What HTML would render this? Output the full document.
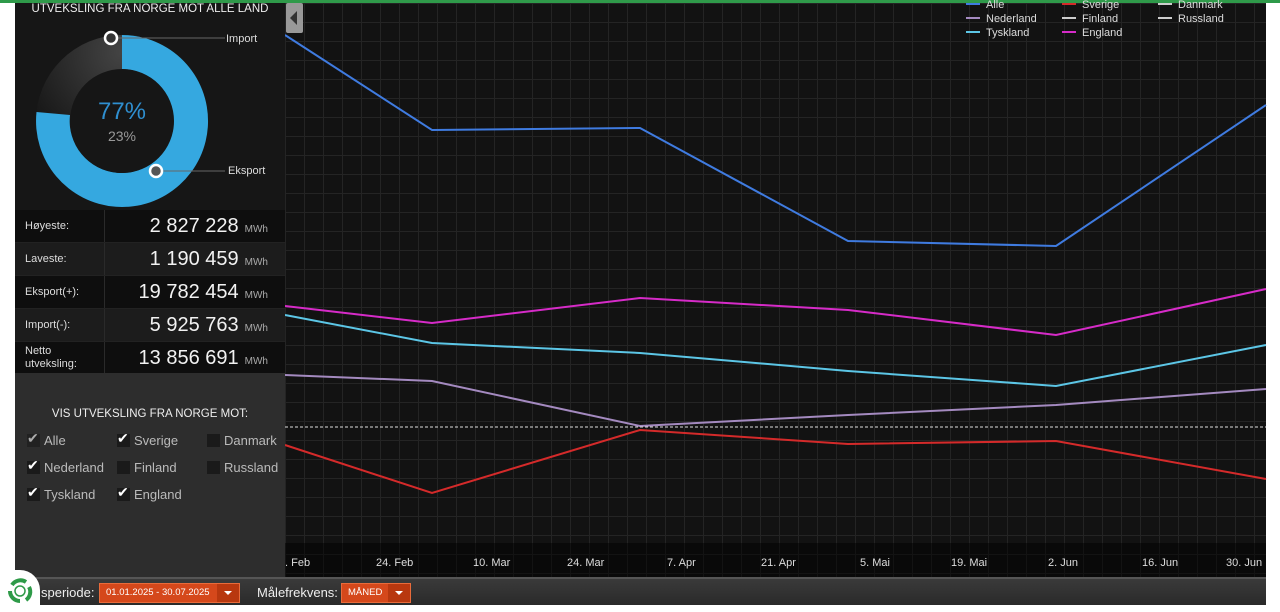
<!DOCTYPE html>
<html><head><meta charset="utf-8"><style>
*{margin:0;padding:0;box-sizing:border-box}
body{width:1280px;height:612px;background:#fff;position:relative;overflow:hidden;font-family:"Liberation Sans",sans-serif;color:#ddd}
.topline{position:absolute;left:0;top:0;width:1280px;height:3px;background:#2f9a4a}
.left{position:absolute;left:15px;top:3px;width:270px;height:207px;background:#161616}
.chart{position:absolute;left:285px;top:3px;width:981px;height:574px;background-color:#121212;
background-image:linear-gradient(#242424 1px,transparent 1px),linear-gradient(90deg,#242424 1px,transparent 1px);background-size:19px 19px;background-position:0 0}
.xband{position:absolute;left:285px;top:543px;width:981px;height:34px;background:rgba(0,0,0,.45)}
.title{position:absolute;left:15px;top:3px;width:270px;text-align:center;font-size:11.5px;color:#eee}
.stats{position:absolute;left:15px;top:210px;width:270px}
.row{height:33px;display:flex;align-items:center;border-bottom:1px solid #222}
.row .l{width:90px;padding-left:10px;font-size:11px;color:#ddd;border-right:1px solid #2a2a2a;height:100%;display:flex;align-items:center;line-height:13px}
.row .v{flex:1;text-align:right;padding-right:17px;font-size:20px;color:#f2f2f2}
.row .v small{font-size:10px;color:#aaa;margin-left:6px}
.cb{position:absolute;left:15px;top:373px;width:270px;height:204px;background:#2d2d2d}
.cb h4{position:absolute;top:35px;width:100%;text-align:center;font-size:11.5px;font-weight:normal;color:#eee}
.it{position:absolute;font-size:13px;color:#bbb}
.box{display:inline-block;width:13px;height:13px;background:#1a1a1a;vertical-align:-2px;margin-right:4px;position:relative}
.ck::after{content:"✔";position:absolute;left:0;top:-4px;font-size:14px;color:#fff}
.bottom{position:absolute;left:15px;top:577px;width:1251px;height:28px;background:linear-gradient(#3a3a3a,#2a2a2a);border-top:2px solid #555}
.sel{position:absolute;top:4px;height:20px;background:#d5481b;border:1px solid #e86b3b;font-size:9.5px;color:#fff;line-height:18px;padding-left:6px}
.sel .ar{position:absolute;right:0;top:0;width:22px;height:18px;background:#b8380f}
.sel .ar::after{content:"";position:absolute;left:7px;top:7px;border:4px solid transparent;border-top:4px solid #fff}
.lbl{position:absolute;top:6px;font-size:13px;color:#eee}
.xl{position:absolute;top:557px;font-size:11px;color:#ddd}
.leg{position:absolute;font-size:11px;color:#ddd}
.leg i{display:inline-block;width:14px;height:2px;vertical-align:3px;margin-right:6px}
</style></head><body>
<div class="chart"></div>
<div class="xband"></div>
<div class="topline"></div>
<svg style="position:absolute;left:0;top:0" width="1280" height="612">
<g fill="none" stroke-width="2">
<polyline stroke="#3f7be0" points="285,35 432,130 640,128 848,241 1056,246 1266,105"/>
<polyline stroke="#d62bc8" points="285,306 432,323 640,298 848,310 1056,335 1266,289"/>
<polyline stroke="#5cc6e6" points="285,315 432,343 640,353 848,371 1056,386 1266,345"/>
<polyline stroke="#a48ac0" points="285,375 432,381 640,426 848,415 1056,405 1266,389"/>
<polyline stroke="#d42a2a" points="285,445 432,493 640,430 848,444 1056,441 1266,479"/>
</g>
<line x1="285" y1="427" x2="1266" y2="427" stroke="#ddd" stroke-width="1" stroke-dasharray="3,2"/>
<rect x="286" y="3" width="17" height="30" rx="2" fill="#999"/>
<path d="M297 11 L290 18 L297 25Z" fill="#333"/>
</svg>
<div class="leg" style="left:966px;top:-1px"><i style="background:#3f7be0"></i>Alle</div>
<div class="leg" style="left:1062px;top:-1px"><i style="background:#d42a2a"></i>Sverige</div>
<div class="leg" style="left:1158px;top:-1px"><i style="background:#ccc"></i>Danmark</div>
<div class="leg" style="left:966px;top:13px"><i style="background:#a48ac0"></i>Nederland</div>
<div class="leg" style="left:1062px;top:13px"><i style="background:#ccc"></i>Finland</div>
<div class="leg" style="left:1158px;top:13px"><i style="background:#ccc"></i>Russland</div>
<div class="leg" style="left:966px;top:27px"><i style="background:#5cc6e6"></i>Tyskland</div>
<div class="leg" style="left:1062px;top:27px"><i style="background:#d62bc8"></i>England</div>
<div class="left"></div>
<div class="title">UTVEKSLING FRA NORGE MOT ALLE LAND</div>
<svg style="position:absolute;left:15px;top:3px" width="270" height="207">
<defs><radialGradient id="g" cx="0.5" cy="0.1" r="0.6"><stop offset="0" stop-color="#444"/><stop offset="1" stop-color="#181818"/></radialGradient></defs>
<circle cx="107" cy="118" r="86" fill="url(#g)"/>
<path d="M107 32 A86 86 0 1 1 21.5 109 L55 112 A52 52 0 1 0 107 66 Z" fill="#35a8e0"/>
<circle cx="107" cy="118" r="52" fill="#161616"/>
<text x="107" y="116" text-anchor="middle" font-size="24" fill="#2f8fd0" font-family="Liberation Sans">77%</text>
<text x="107" y="138" text-anchor="middle" font-size="14" fill="#999" font-family="Liberation Sans">23%</text>
<line x1="96" y1="35" x2="210" y2="35" stroke="#666"/>
<line x1="141" y1="168" x2="210" y2="168" stroke="#666"/>
<circle cx="96" cy="35" r="6" fill="#333" stroke="#fff" stroke-width="2.5"/>
<circle cx="141" cy="168" r="6" fill="#555" stroke="#fff" stroke-width="2.5"/>
<text x="211" y="39" font-size="11" fill="#ddd" font-family="Liberation Sans">Import</text>
<text x="213" y="171" font-size="11" fill="#ddd" font-family="Liberation Sans">Eksport</text>
</svg>
<div class="stats">
<div class="row" style="background:#0e0e0e"><div class="l">Høyeste:</div><div class="v">2 827 228<small>MWh</small></div></div>
<div class="row" style="background:#1c1c1c"><div class="l">Laveste:</div><div class="v">1 190 459<small>MWh</small></div></div>
<div class="row" style="background:#0e0e0e"><div class="l">Eksport(+):</div><div class="v">19 782 454<small>MWh</small></div></div>
<div class="row" style="background:#1c1c1c"><div class="l">Import(-):</div><div class="v">5 925 763<small>MWh</small></div></div>
<div class="row" style="background:#0e0e0e"><div class="l">Netto<br>utveksling:</div><div class="v">13 856 691<small>MWh</small></div></div>
</div>
<div class="cb"><h4>VIS UTVEKSLING FRA NORGE MOT:</h4>
<div class="it" style="left:12px;top:60px"><span class="box ck" style="opacity:.6"></span>Alle</div>
<div class="it" style="left:102px;top:60px"><span class="box ck"></span>Sverige</div>
<div class="it" style="left:192px;top:60px"><span class="box"></span>Danmark</div>
<div class="it" style="left:12px;top:87px"><span class="box ck"></span>Nederland</div>
<div class="it" style="left:102px;top:87px"><span class="box"></span>Finland</div>
<div class="it" style="left:192px;top:87px"><span class="box"></span>Russland</div>
<div class="it" style="left:12px;top:114px"><span class="box ck"></span>Tyskland</div>
<div class="it" style="left:102px;top:114px"><span class="box ck"></span>England</div>
</div>
<div class="xl" style="left:285px">. Feb</div>
<div class="xl" style="left:376px">24. Feb</div>
<div class="xl" style="left:473px">10. Mar</div>
<div class="xl" style="left:567px">24. Mar</div>
<div class="xl" style="left:667px">7. Apr</div>
<div class="xl" style="left:761px">21. Apr</div>
<div class="xl" style="left:860px">5. Mai</div>
<div class="xl" style="left:951px">19. Mai</div>
<div class="xl" style="left:1048px">2. Jun</div>
<div class="xl" style="left:1142px">16. Jun</div>
<div class="xl" style="left:1226px">30. Jun</div>
<div class="bottom">
<div class="lbl" style="left:26px">speriode:</div>
<div class="sel" style="left:84px;width:141px">01.01.2025 - 30.07.2025<span class="ar"></span></div>
<div class="lbl" style="left:242px">Målefrekvens:</div>
<div class="sel" style="left:326px;width:70px">MÅNED<span class="ar"></span></div>
</div>
<div style="position:absolute;left:0;top:570px;width:40px;height:42px;background:#fff;border-top-right-radius:20px"></div>
<svg style="position:absolute;left:6px;top:577px" width="28" height="28" viewBox="0 0 28 28">
<path d="M6 8 A10 10 0 0 1 20 5" stroke="#2e9a48" stroke-width="4" fill="none"/>
<path d="M23 10 A10 10 0 0 1 20 23" stroke="#2e9a48" stroke-width="4" fill="none"/>
<path d="M14 24 A10 10 0 0 1 4 14" stroke="#2e9a48" stroke-width="4" fill="none"/>
<circle cx="14" cy="14" r="5" fill="none" stroke="#2e9a48" stroke-width="1.5"/>
</svg>
</body></html>
